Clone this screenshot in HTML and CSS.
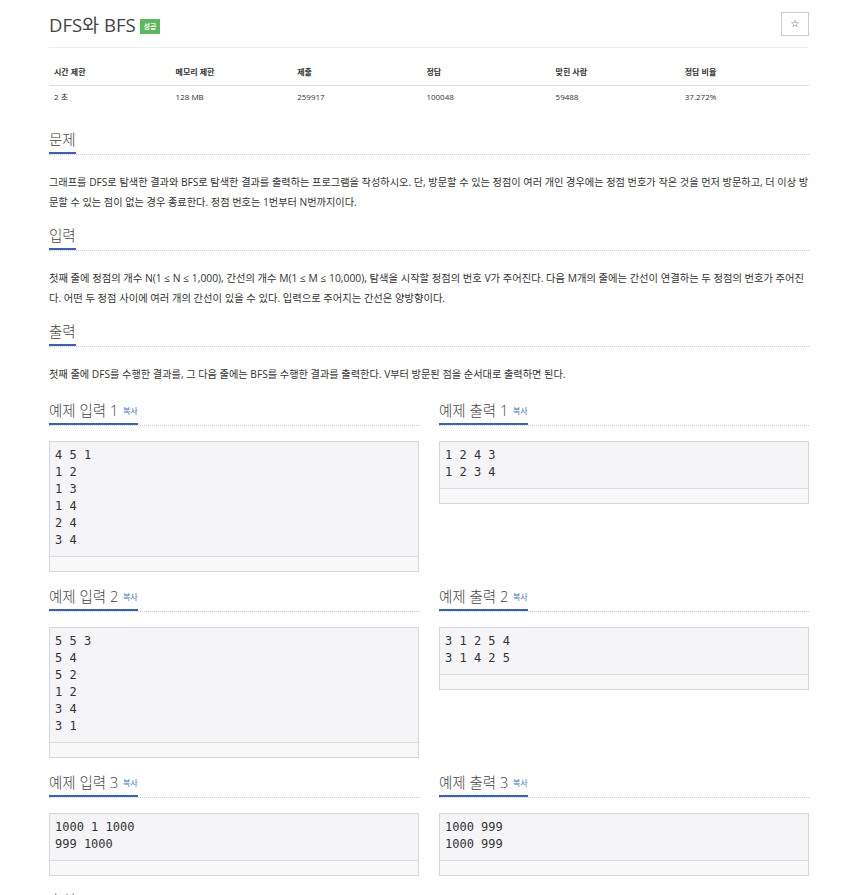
FILE: index.html
```html
<!DOCTYPE html>
<html lang="ko">
<head>
<meta charset="utf-8">
<title>DFS와 BFS</title>
<link rel="stylesheet" href="styles.css">
</head>
<body>
<div class="page">
  <div class="page-header">
    <h1 class="title">DFS와 BFS <span class="badge">성공</span></h1>
    <button class="star" type="button">☆</button>
  </div>

  <table class="info">
    <thead>
      <tr><th>시간 제한</th><th>메모리 제한</th><th>제출</th><th>정답</th><th>맞힌 사람</th><th>정답 비율</th></tr>
    </thead>
    <tbody>
      <tr><td>2 초</td><td>128 MB</td><td>259917</td><td>100048</td><td>59488</td><td>37.272%</td></tr>
    </tbody>
  </table>

  <section class="section">
    <h2 class="headline"><span class="hl">문제</span></h2>
    <p class="text">그래프를 DFS로 탐색한 결과와 BFS로 탐색한 결과를 출력하는 프로그램을 작성하시오. 단, 방문할 수 있는 정점이 여러 개인 경우에는 정점 번호가 작은 것을 먼저 방문하고, 더 이상 방문할 수 있는 점이 없는 경우 종료한다. 정점 번호는 1번부터 N번까지이다.</p>
  </section>

  <section class="section">
    <h2 class="headline"><span class="hl">입력</span></h2>
    <p class="text text-wide">첫째 줄에 정점의 개수 N(1 ≤ N ≤ 1,000), 간선의 개수 M(1 ≤ M ≤ 10,000), 탐색을 시작할 정점의 번호 V가 주어진다. 다음 M개의 줄에는 간선이 연결하는 두 정점의 번호가 주어진다. 어떤 두 정점 사이에 여러 개의 간선이 있을 수 있다. 입력으로 주어지는 간선은 양방향이다.</p>
  </section>

  <section class="section">
    <h2 class="headline"><span class="hl">출력</span></h2>
    <p class="text">첫째 줄에 DFS를 수행한 결과를, 그 다음 줄에는 BFS를 수행한 결과를 출력한다. V부터 방문된 점을 순서대로 출력하면 된다.</p>
  </section>

  <div class="samples">
    <div class="sample">
      <h2 class="headline"><span class="hl">예제 입력 1 <a class="copy">복사</a></span></h2>
      <div class="box"><pre class="code">4 5 1
1 2
1 3
1 4
2 4
3 4</pre><div class="track"></div></div>
    </div>
    <div class="sample">
      <h2 class="headline"><span class="hl">예제 출력 1 <a class="copy">복사</a></span></h2>
      <div class="box"><pre class="code">1 2 4 3
1 2 3 4</pre><div class="track"></div></div>
    </div>

    <div class="sample">
      <h2 class="headline"><span class="hl">예제 입력 2 <a class="copy">복사</a></span></h2>
      <div class="box"><pre class="code">5 5 3
5 4
5 2
1 2
3 4
3 1</pre><div class="track"></div></div>
    </div>
    <div class="sample">
      <h2 class="headline"><span class="hl">예제 출력 2 <a class="copy">복사</a></span></h2>
      <div class="box"><pre class="code">3 1 2 5 4
3 1 4 2 5</pre><div class="track"></div></div>
    </div>

    <div class="sample">
      <h2 class="headline"><span class="hl">예제 입력 3 <a class="copy">복사</a></span></h2>
      <div class="box"><pre class="code">1000 1 1000
999 1000</pre><div class="track"></div></div>
    </div>
    <div class="sample">
      <h2 class="headline"><span class="hl">예제 출력 3 <a class="copy">복사</a></span></h2>
      <div class="box"><pre class="code">1000 999
1000 999</pre><div class="track"></div></div>
    </div>
  </div>

  <section class="section last">
    <h2 class="headline"><span class="hl">출처</span></h2>
  </section>
</div>
</body>
</html>
```

FILE: styles.css
```css
html, body {
  margin: 0;
  padding: 0;
  background: #fff;
}
body {
  font-family: "Open Sans", "Noto Sans CJK KR", sans-serif;
  color: #333;
}
.page {
  width: 760px;
  margin: 0 0 0 49px;
}
.page-header {
  display: flex;
  justify-content: space-between;
  align-items: flex-start;
  border-bottom: 1px solid #eee;
  padding-top: 10px;
  height: 37px;
}
.title {
  margin: 0;
  font-size: 18.5px;
  font-weight: 400;
  line-height: 30px;
  color: #444;
  display: flex;
  align-items: center;
  gap: 0;
}
.badge {
  display: inline-block;
  background: #5cb85c;
  color: #fff;
  font-size: 7px;
  font-weight: 700;
  line-height: 15px;
  height: 15px;
  padding: 0 4px;
  margin-left: 4px;
  margin-top: 2px;
}
.star {
  margin-top: 2px;
  width: 28px;
  height: 24px;
  border: 1px solid #ccc;
  background: #fff;
  color: #333;
  font-size: 10px;
  line-height: 1;
  padding: 0;
  font-family: "DejaVu Sans", sans-serif;
}
.info {
  width: 100%;
  border-collapse: collapse;
  margin-top: 10px;
  font-size: 8px;
  color: #333;
}
.info th, .info td {
  text-align: left;
  padding: 0 5px;
  line-height: 12px;
}
.info th {
  font-weight: 700;
  height: 27px;
  border-bottom: 1px solid #ddd;
}
.info td {
  height: 21px;
  vertical-align: middle;
}
.info th:nth-child(1), .info th:nth-child(2) { width: 16%; }
.info th:nth-child(n+3) { width: 17%; }

.section {
  margin-top: 22px;
}
.section + .section {
  margin-top: 13px;
}
.headline {
  margin: 0;
  font-size: 14.5px;
  font-weight: 300;
  line-height: 22px;
  color: #444;
  padding-bottom: 2px;
  border-bottom: 1px dotted #c8d0dc;
  display: flex;
}
.hl {
  display: inline-block;
  border-bottom: 2px solid #3a63ab;
  margin-bottom: -2px;
  padding-bottom: 1px;
}
.copy {
  font-size: 8px;
  font-weight: 400;
  color: #3a74c4;
  vertical-align: 2px;
  margin-left: 1px;
}
.text {
  margin: 17px 0 0;
  font-size: 10.2px;
  line-height: 20px;
  color: #333;
}
.text-wide {
  font-size: 10.3px;
}
.samples {
  display: grid;
  grid-template-columns: 370px 370px;
  column-gap: 20px;
  row-gap: 14px;
  margin-top: 16px;
  align-items: start;
}
.section.last {
  margin-top: 14px;
}
.box {
  margin-top: 15px;
  border: 1px solid #d6d6dd;
  background: #f5f5f7;
}
.code {
  margin: 0;
  padding: 5px 5px 7px;
  font-family: "DejaVu Sans Mono", "Liberation Mono", monospace;
  font-size: 12px;
  line-height: 17px;
  color: #333;
  white-space: pre;
}
.track {
  height: 14px;
  border-top: 1px solid #dcdce2;
  background: #f8f8f9;
}
```
